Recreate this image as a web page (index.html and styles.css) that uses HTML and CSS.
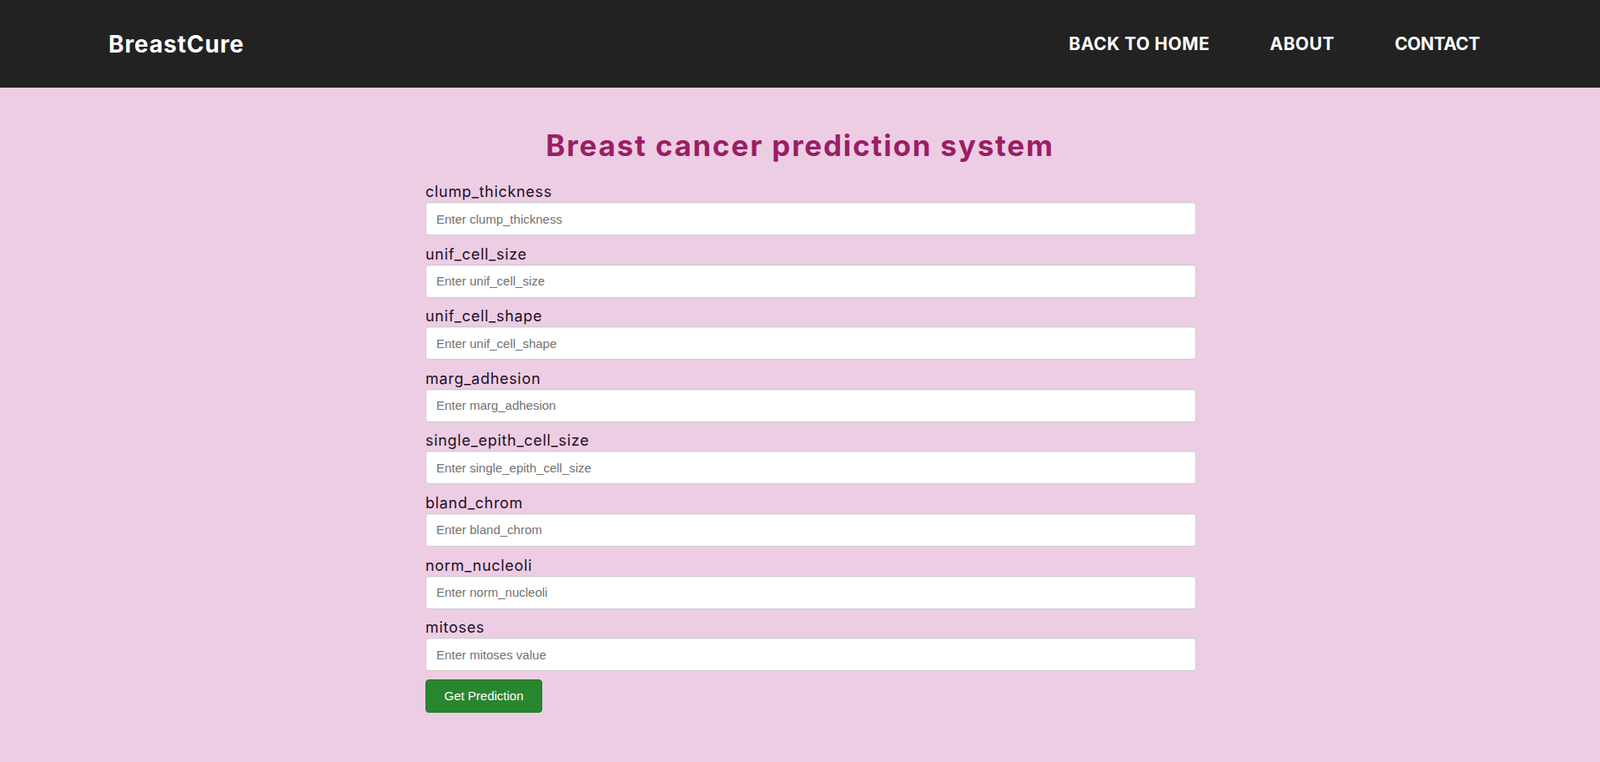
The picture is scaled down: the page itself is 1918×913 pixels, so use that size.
FILE: index.html
```html
<!DOCTYPE html>
<html lang="en">
<head>
<meta charset="utf-8">
<title>BreastCure</title>
<link rel="stylesheet" href="styles.css">
</head>
<body>
<header class="navbar">
  <a class="brand" href="#">BreastCure</a>
  <nav class="nav-links">
    <a href="#">BACK TO HOME</a>
    <a href="#">ABOUT</a>
    <a href="#" class="tight">CONTACT</a>
  </nav>
</header>
<main class="main">
  <h1 class="title">Breast cancer prediction system</h1>
  <form class="form">
    <div class="group"><label>clump_thickness</label><input class="field" placeholder="Enter clump_thickness"></div>
    <div class="group"><label>unif_cell_size</label><input class="field" placeholder="Enter unif_cell_size"></div>
    <div class="group"><label>unif_cell_shape</label><input class="field" placeholder="Enter unif_cell_shape"></div>
    <div class="group"><label>marg_adhesion</label><input class="field" placeholder="Enter marg_adhesion"></div>
    <div class="group"><label>single_epith_cell_size</label><input class="field" placeholder="Enter single_epith_cell_size"></div>
    <div class="group"><label>bland_chrom</label><input class="field" placeholder="Enter bland_chrom"></div>
    <div class="group"><label>norm_nucleoli</label><input class="field" placeholder="Enter norm_nucleoli"></div>
    <div class="group"><label>mitoses</label><input class="field" placeholder="Enter mitoses value"></div>
    <button type="button" class="btn">Get Prediction</button>
  </form>
</main>
</body>
</html>
```
FILE: styles.css
```css
* { box-sizing: border-box; }
html, body { margin: 0; padding: 0; }
body {
  background: #edcde4;
  font-family: "Inter", "DejaVu Sans", sans-serif;
  min-height: 913px;
}
.navbar {
  height: 105px;
  background: #222222;
  display: flex;
  align-items: center;
  justify-content: space-between;
  padding: 0 144px 0 130px;
}
.brand {
  color: #fff;
  text-decoration: none;
  font-weight: 700;
  font-size: 28px;
  letter-spacing: 0.9px;
}
.nav-links {
  display: flex;
  gap: 72px;
}
.nav-links a {
  color: #fff;
  text-decoration: none;
  font-weight: 700;
  font-size: 21px;
  letter-spacing: 0.5px;
}
.nav-links a.tight {
  letter-spacing: -0.3px;
}
.main {
  display: flex;
  flex-direction: column;
}
.title {
  margin: 49px 0 0;
  text-align: center;
  font-size: 35px;
  line-height: 40px;
  font-weight: 700;
  letter-spacing: 1.8px;
  color: #9a1e65;
}
.form {
  width: 924px;
  margin-left: calc(50% - 449px);
  margin-top: 23px;
}
.group {
  margin-bottom: 9.6px;
}
.group label {
  display: block;
  font-size: 18px;
  line-height: 25px;
  letter-spacing: 0.7px;
  color: #1d0f24;
}
.field {
  display: block;
  width: 100%;
  height: 40px;
  padding: 6px 12px;
  font-family: "Liberation Sans", Arial, sans-serif;
  font-size: 15px;
  color: #555;
  background: #fff;
  border: 1px solid #ccc;
  border-radius: 4px;
  box-shadow: inset 0 1px 1px rgba(0,0,0,.075);
  outline: none;
}
.field::placeholder { color: #727272; }
.btn {
  display: block;
  margin-top: 5px;
  height: 40px;
  width: 140px;
  background: #28862f;
  color: #fff;
  border: 1px solid #237a2a;
  border-radius: 4px;
  font-family: "Liberation Sans", Arial, sans-serif;
  font-size: 15px;
  cursor: pointer;
}
```
